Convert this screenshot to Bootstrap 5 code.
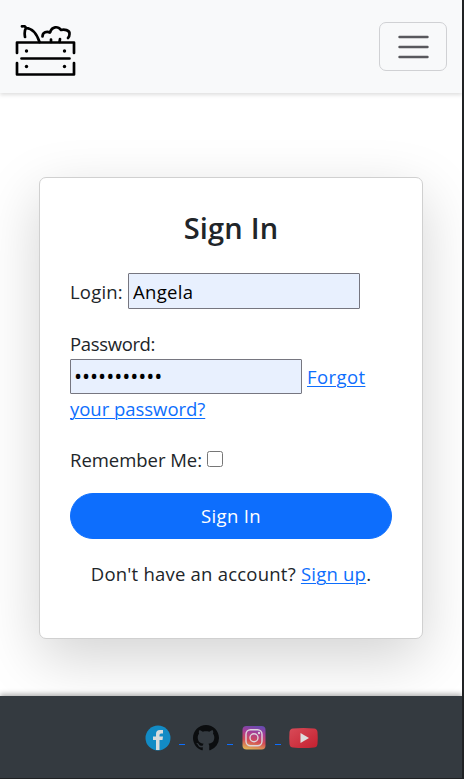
<!DOCTYPE html>
<html lang="en">
<head>
<meta charset="utf-8">
<meta name="viewport" content="width=device-width, initial-scale=1">
<title>Sign In</title>
<link href="https://cdn.jsdelivr.net/npm/bootstrap@5.3.0/dist/css/bootstrap.min.css" rel="stylesheet">
<style>
html{font-size:19.2px}
body{font-family:"Segoe UI","Open Sans","Noto Sans",sans-serif;font-size:18.5px;line-height:29px;letter-spacing:-.03px;color:#212529;height:779px;overflow:hidden;border-right:2px solid #202224}
a{color:#0d6efd;text-decoration-thickness:1px;text-underline-offset:2px}
.site-bar{height:93px;padding:0 15px;background:#f8f9fa;box-shadow:0 2px 4px rgba(0,0,0,.13)}
.site-bar .navbar-toggler{width:68px;height:49px;padding:0;border:1px solid #d0d1d4;border-radius:7px;line-height:1}
.crate{margin-top:11px}
.page-main{padding:84px 39px 0;height:603px}
.sign-card{height:462px;padding:34px 30px 0;border:1px solid #d0d0d0;border-radius:7px;box-shadow:0 19px 58px rgba(0,0,0,.175)}
.sign-card h1{font-size:29px;line-height:32px;font-weight:600;letter-spacing:.2px;margin:0 0 29px}
.login-row{margin-bottom:20px}
.login-row label{letter-spacing:.2px}
.login-row .field{margin-right:32px;letter-spacing:.3px}
.pass-row{margin-bottom:22px}
.pass-row label{letter-spacing:-.35px;margin-bottom:1px}
.forgot-start{letter-spacing:.4px;margin-left:5px}
.remember-row{margin-bottom:19px}
.signup-row{margin-top:20px;letter-spacing:.22px}
.field{width:232px;height:36px;padding:1px 4px;border:1px solid #767680;border-radius:1px;background:#e8f0fe;color:#000;font:inherit}
.field-pass{height:35px;font-size:21.5px;letter-spacing:-.05px;padding:0 3px 3px}
.check{width:16px;height:16px;margin:-2px 0 0 5px;accent-color:#0d6efd}
.btn-sign{height:46px;line-height:30px;font-size:18.5px;letter-spacing:.35px;background:#0d6efd}
.site-foot{height:83px;padding-top:2px;background:#343a40;border-bottom:1px solid #202224;box-shadow:0 -2px 5px rgba(0,0,0,.3)}
.link-gap{width:6px;height:1px;background:#0d6efd;margin:12px 8px 0}
</style>
</head>
<body class="d-flex flex-column">
<nav class="site-bar d-flex align-items-center justify-content-between flex-shrink-0">
  <a href="#" class="d-block lh-1" aria-label="Home"><svg class="crate d-block" width="62" height="54" viewBox="0 0 62 54" fill="none" stroke="#000" stroke-width="2.700" stroke-linecap="round" stroke-linejoin="round">
    <path d="M2 28V17.500H59V28M2 38V49.500H59V38M6.500 33.500H54.500"/>
    <path d="M7 1.400Q10 .4 11 3Q20 3.500 24.500 17M11 3Q9 6 10 12"/>
    <path d="M27.500 11.500C27.500 7 32 6 35 7.500C37 1 43 1 46 5C49 4 55 5 54.500 9C54.500 11 54 12 53 13M36 14.500V17M45 14L44.500 17"/>
    <g fill="#000" stroke="none"><circle cx="11.500" cy="26" r="1.700"/><circle cx="49.500" cy="26" r="1.700"/><circle cx="11.500" cy="41.500" r="1.700"/><circle cx="49.500" cy="41.500" r="1.700"/></g>
  </svg></a>
  <button class="navbar-toggler" type="button" aria-label="Menu"><svg width="32" height="24" viewBox="0 0 32 24" stroke="#58585d" stroke-width="2.400" stroke-linecap="round"><path d="M2.500 2H30.500M2.500 12H30.500M2.500 22H30.500"/></svg></button>
</nav>
<main class="page-main flex-shrink-0">
  <form class="card sign-card d-block">
    <h1 class="text-center">Sign In</h1>
    <div class="login-row d-flex align-items-center"><label for="login" class="me-auto">Login:</label><input id="login" class="field" value="Angela"></div>
    <div class="pass-row"><label for="pass" class="d-block">Password:</label><div class="d-flex align-items-center"><input id="pass" class="field field-pass" type="password" value="password123"><a href="#" class="forgot-start">Forgot</a></div><a href="#" class="d-block">your password?</a></div>
    <div class="remember-row d-flex align-items-center"><label for="rem">Remember Me:</label><input id="rem" type="checkbox" class="check"></div>
    <button type="button" class="btn btn-primary btn-sign rounded-pill w-100">Sign In</button>
    <div class="signup-row text-center">Don't have an account? <a href="#">Sign up</a>.</div>
  </form>
</main>
<footer class="site-foot d-flex justify-content-center align-items-center position-relative flex-shrink-0">
  <svg width="26" height="26" viewBox="0 0 26 26"><circle cx="13" cy="13" r="12.500" fill="#128bc5"/><path d="M11 25V15H8V11.500H11V9Q11 5 15 5H18V8.500H16Q14.500 8.500 14.500 10V11.500H18L17.500 15H14.500V25Z" fill="#d9dcdd"/></svg>
  <span class="link-gap"></span>
  <svg width="26" height="26" viewBox="0 0 16 16"><path fill="#0b0d0f" d="M8 0C3.580 0 0 3.580 0 8c0 3.540 2.290 6.530 5.470 7.590.4.070.55-.17.55-.38 0-.19-.01-.82-.01-1.490-2.010.37-2.530-.49-2.690-.94-.09-.23-.48-.94-.82-1.130-.28-.15-.68-.52-.01-.53.63-.01 1.080.58 1.230.82.72 1.210 1.870.87 2.330.66.07-.52.28-.87.51-1.070-1.780-.2-3.640-.89-3.640-3.950 0-.87.31-1.590.82-2.150-.08-.2-.36-1.020.08-2.120 0 0 .67-.21 2.200.82.64-.18 1.320-.27 2-.27s1.360.09 2 .27c1.530-1.040 2.200-.82 2.200-.82.44 1.100.16 1.920.08 2.120.51.56.82 1.270.82 2.150 0 3.070-1.870 3.750-3.650 3.950.29.25.54.73.54 1.480 0 1.070-.01 1.930-.01 2.200 0 .21.15.46.55.38A8 8 0 0 0 16 8c0-4.420-3.580-8-8-8"/></svg>
  <span class="link-gap"></span>
  <svg width="26" height="26" viewBox="0 0 26 26"><defs><linearGradient id="ig" x1=".6" y1="0" x2=".4" y2="1"><stop stop-color="#6a4bb0"/><stop offset=".3" stop-color="#a83d95"/><stop offset=".65" stop-color="#d34a55"/><stop offset="1" stop-color="#dfae55"/></linearGradient></defs><rect x="1.500" y="1" width="23" height="23.500" rx="4" fill="url(#ig)"/><g fill="none" stroke="#ddd5dc" stroke-width="1.400"><rect x="5" y="4.700" width="16" height="16" rx="4.500"/><circle cx="13" cy="12.700" r="4"/></g><circle cx="18" cy="8" r="1.200" fill="#ddd5dc"/></svg>
  <span class="link-gap"></span>
  <svg width="29" height="26" viewBox="0 0 29 26"><defs><linearGradient id="yt" x2="1" y2="1"><stop stop-color="#d84b58"/><stop offset="1" stop-color="#c4202f"/></linearGradient></defs><path fill="url(#yt)" d="M4 3.500Q14.500 2.500 25 3.500Q28 3.500 28.500 7Q29 13 28.500 19Q28 22.500 25 22.500Q14.500 23.500 4 22.500Q1 22.500.5 19Q0 13 .5 7Q1 3.500 4 3.500"/><path fill="#ddd" d="M11.500 8L20 13L11.500 18Z"/></svg>
</footer>
<script src="https://cdn.jsdelivr.net/npm/bootstrap@5.3.0/dist/js/bootstrap.bundle.min.js"></script>
</body>
</html>
